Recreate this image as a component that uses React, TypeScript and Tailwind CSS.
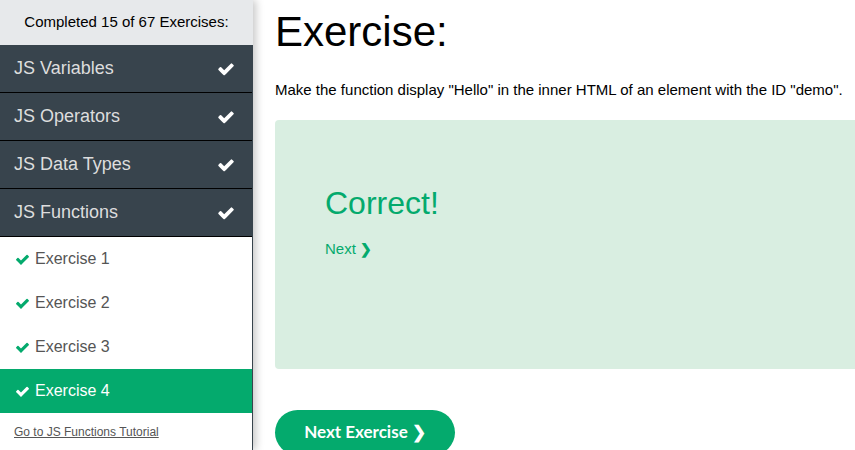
import React from "react";

const topics = ["JS Variables", "JS Operators", "JS Data Types", "JS Functions"];
const exercises = ["Exercise 1", "Exercise 2", "Exercise 3", "Exercise 4"];

function Check({ className }: { className?: string }) {
  return (
    <svg viewBox="0 0 1792 1792" className={className} fill="currentColor">
      <path d="M1671 566q0 40-28 68l-724 724-136 136q-28 28-68 28t-68-28l-136-136-362-362q-28-28-28-68t28-68l136-136q28-28 68-28t68 28l294 295 656-657q28-28 68-28t68 28l136 136q28 28 28 68z" />
    </svg>
  );
}

export default function App() {
  return (
    <div
      className="flex w-[855px] h-[450px] overflow-hidden bg-white"
      style={{ fontFamily: '"Liberation Sans", Arial, sans-serif' }}
    >
      <aside className="relative z-10 w-[253px] shrink-0 flex flex-col shadow-[3px_0_8px_rgba(0,0,0,0.22)]">
        <div className="h-[45px] shrink-0 bg-[#e7e9eb] flex items-center justify-center text-[15px] text-black">
          Completed 15 of 67 Exercises:
        </div>
        <div className="flex-1 flex flex-col border-r border-[#38444d]">
          {topics.map((t) => (
            <div
              key={t}
              className="h-[48px] shrink-0 bg-[#38444d] border-b border-black flex items-center justify-between pl-[14px] pr-[17px] text-[18px] text-[#dddddd]"
            >
              <span>{t}</span>
              <Check className="text-white w-[18px] h-[18px]" />
            </div>
          ))}
          {exercises.map((e, i) => (
            <div
              key={e}
              className={
                i === 3
                  ? "h-[44px] shrink-0 bg-[#04aa6d] flex items-center pl-[15px] gap-[5px] text-[16px] text-white"
                  : "h-[44px] shrink-0 bg-white flex items-center pl-[15px] gap-[5px] text-[16px] text-[#555555]"
              }
            >
              <Check className={i === 3 ? "text-white w-[15px] h-[15px]" : "text-[#04aa6d] w-[15px] h-[15px]"} />
              <span>{e}</span>
            </div>
          ))}
          <div className="pl-[14px] pt-[6px]">
            <a className="text-[12px] text-[#555555] underline cursor-pointer">Go to JS Functions Tutorial</a>
          </div>
        </div>
      </aside>
      <main className="flex-1 pl-[22px] flex flex-col">
        <h1 className="text-[42px] leading-none mt-[11px] text-black shrink-0">Exercise:</h1>
        <p className="text-[15px] text-black mt-[26px] shrink-0">
          Make the function display "Hello" in the inner HTML of an element with the ID "demo".
        </p>
        <div className="mt-[18px] h-[249px] shrink-0 bg-[#d9eee1] rounded-l-[4px] pl-[50px] pt-[67px]">
          <div className="text-[32px] text-[#04aa6d] leading-none">Correct!</div>
          <div className="mt-[19px] text-[15px] text-[#04aa6d]">
            Next <span className="text-[14px] font-bold">❯</span>
          </div>
        </div>
        <div className="mt-[41px] shrink-0">
          <button
            className="w-[180px] h-[45px] rounded-full bg-[#04aa6d] text-white text-[17px] font-bold"
            style={{ fontFamily: 'Lato, sans-serif' }}
          >
            Next Exercise ❯
          </button>
        </div>
      </main>
    </div>
  );
}
